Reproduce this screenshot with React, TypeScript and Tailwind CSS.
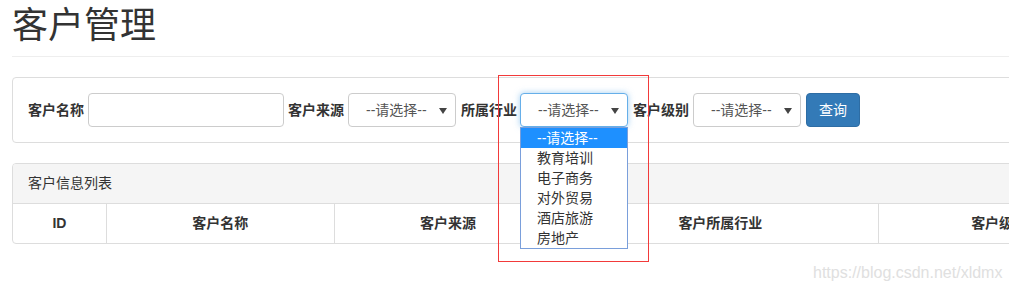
import React from "react";

const font = "font-['Liberation_Sans','Noto_Sans_CJK_SC',sans-serif]";

const industries = ["--请选择--", "教育培训", "电子商务", "对外贸易", "酒店旅游", "房地产"];

function Arrow() {
  return (
    <svg width="8" height="6" viewBox="0 0 8 6" className="absolute right-[8px] top-[14px]">
      <path d="M0 0 L8 0 L4 6 Z" fill="#444" />
    </svg>
  );
}

function Select({ focused = false }: { focused?: boolean }) {
  return (
    <div
      className={
        "relative w-[108px] h-[34px] rounded-[4px] bg-white flex items-center pl-[17px] text-[14px] text-[#555] " +
        (focused
          ? "border border-[#66afe9] shadow-[0_0_6px_rgba(102,175,233,0.6)]"
          : "border border-[#ccc]")
      }
    >
      --请选择--
      <Arrow />
    </div>
  );
}

export default function App() {
  return (
    <div className={`relative w-[1009px] h-[291px] overflow-hidden bg-white text-[#333] ${font}`}>
      <div className="w-[1120px] pl-[12px]">
        {/* page header */}
        <div className="pt-[6px] pb-[10px] border-b border-[#eee]">
          <h1 className="text-[36px] leading-[40px] font-normal">客户管理</h1>
        </div>

        {/* filter form */}
        <div className="mt-[20px] border border-[#ddd] rounded-[4px] p-[15px]">
          <div className="flex items-center text-[14px]">
            <span className="font-bold w-[56px]">客户名称</span>
            <div className="ml-[4px] w-[196px] h-[34px] border border-[#ccc] rounded-[4px]" />
            <span className="font-bold ml-[4px] w-[56px]">客户来源</span>
            <div className="ml-[4px]">
              <Select />
            </div>
            <span className="font-bold ml-[5px] w-[56px]">所属行业</span>
            <div className="ml-[3px] relative">
              <Select focused />
              {/* open dropdown */}
              <div className="absolute left-0 top-[34px] w-[108px] bg-white border border-[#7a9fdb] z-10">
                {industries.map((opt, i) => (
                  <div
                    key={opt}
                    className={
                      "h-[20px] leading-[20px] pl-[16px] text-[14px] " +
                      (i === 0 ? "bg-[#1e90ff] text-white" : "text-[#333]")
                    }
                  >
                    {opt}
                  </div>
                ))}
              </div>
            </div>
            <span className="font-bold ml-[5px] w-[56px]">客户级别</span>
            <div className="ml-[4px]">
              <Select />
            </div>
            <button className="ml-[5px] h-[34px] px-[12px] rounded-[4px] bg-[#337ab7] border border-[#2e6da4] text-white text-[14px]">
              查询
            </button>
          </div>
        </div>

        {/* list panel */}
        <div className="mt-[20px] border border-[#ddd] rounded-[4px] overflow-hidden">
          <div className="bg-[#f5f5f5] border-b border-[#ddd] h-[40px] flex items-center px-[15px] text-[14px]">
            客户信息列表
          </div>
          <div className="flex h-[39px] text-[14px] font-bold">
            <div className="w-[94px] flex items-center justify-center border-r border-[#ddd]">ID</div>
            <div className="w-[228px] flex items-center justify-center border-r border-[#ddd]">客户名称</div>
            <div className="w-[228px] flex items-center justify-center border-r border-[#ddd]">客户来源</div>
            <div className="w-[317px] flex items-center justify-center border-r border-[#ddd]">客户所属行业</div>
            <div className="w-[240px] flex items-center justify-center">客户级别</div>
          </div>
        </div>
      </div>

      {/* annotation box */}
      <div className="absolute left-[498px] top-[75px] w-[151px] h-[187px] border border-[#f23a3a] pointer-events-none" />

      {/* watermark */}
      <div className="absolute left-[813px] top-[261px] text-[16px] text-[#e0e0e0] font-['Liberation_Sans',sans-serif]">
        https://blog.csdn.net/xldmx
      </div>
    </div>
  );
}
